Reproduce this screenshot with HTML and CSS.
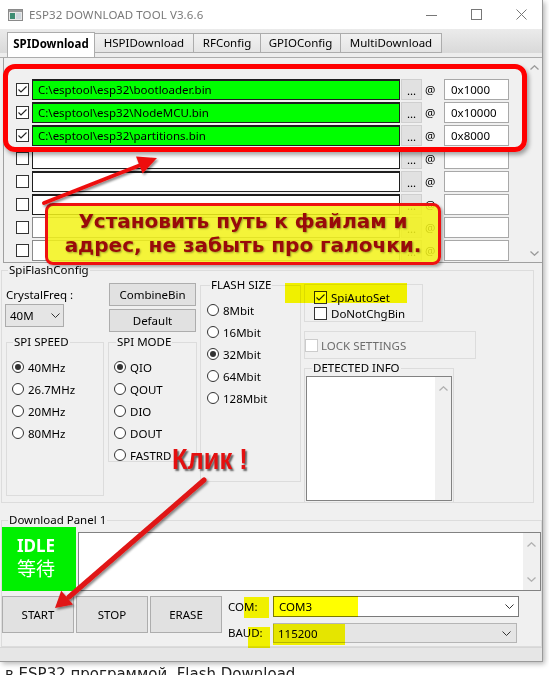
FILE: index.html
```html
<!DOCTYPE html>
<html lang="ru">
<head>
<meta charset="utf-8">
<title>ESP32 DOWNLOAD TOOL V3.6.6</title>
<link rel="stylesheet" href="styles.css">
</head>
<body>
<div class="window">
  <div class="titlebar">
    <svg class="appicon" width="15" height="12" viewBox="0 0 15 12"><rect x="0.5" y="0.5" width="14" height="11" fill="#e8e8e8" stroke="#8a8a8a"/><rect x="1" y="1" width="13" height="2" fill="#9a9a9a"/><rect x="2" y="4" width="5" height="6" fill="#3d8d73"/><rect x="8" y="4" width="5" height="6" fill="#cfd8de"/></svg>
    <span class="title">ESP32 DOWNLOAD TOOL V3.6.6</span>
    <div class="winctrls">
      <svg width="11" height="11" viewBox="0 0 11 11"><path d="M0 6.5H11" stroke="#777" stroke-width="1"/></svg>
      <svg width="11" height="11" viewBox="0 0 11 11"><rect x="0.5" y="0.5" width="10" height="10" fill="none" stroke="#777"/></svg>
      <svg width="11" height="11" viewBox="0 0 11 11"><path d="M0.5 0.5L10.5 10.5M10.5 0.5L0.5 10.5" stroke="#777" stroke-width="1"/></svg>
    </div>
  </div>

  <div class="tabbar">
    <div class="tab active w1">SPIDownload</div>
    <div class="tab w2">HSPIDownload</div>
    <div class="tab w3">RFConfig</div>
    <div class="tab w4">GPIOConfig</div>
    <div class="tab w5">MultiDownload</div>
  </div>

  <div class="content">
    <div class="filelist">
      <div class="rows">
        <div class="frow">
          <span class="cb"><svg width="11" height="11" viewBox="0 0 11 11"><path d="M1.5 5.5L4 8L9.5 2.5" fill="none" stroke="#222" stroke-width="1.1"/></svg></span>
          <div class="path filled">C:\esptool\esp32\bootloader.bin</div>
          <div class="dots">...</div>
          <span class="at">@</span>
          <div class="addr">0x1000</div>
        </div>
        <div class="frow">
          <span class="cb"><svg width="11" height="11" viewBox="0 0 11 11"><path d="M1.5 5.5L4 8L9.5 2.5" fill="none" stroke="#222" stroke-width="1.1"/></svg></span>
          <div class="path filled">C:\esptool\esp32\NodeMCU.bin</div>
          <div class="dots">...</div>
          <span class="at">@</span>
          <div class="addr">0x10000</div>
        </div>
        <div class="frow">
          <span class="cb"><svg width="11" height="11" viewBox="0 0 11 11"><path d="M1.5 5.5L4 8L9.5 2.5" fill="none" stroke="#222" stroke-width="1.1"/></svg></span>
          <div class="path filled">C:\esptool\esp32\partitions.bin</div>
          <div class="dots">...</div>
          <span class="at">@</span>
          <div class="addr">0x8000</div>
        </div>
        <div class="frow">
          <span class="cb"></span>
          <div class="path"></div>
          <div class="dots">...</div>
          <span class="at">@</span>
          <div class="addr"></div>
        </div>
        <div class="frow">
          <span class="cb"></span>
          <div class="path"></div>
          <div class="dots">...</div>
          <span class="at">@</span>
          <div class="addr"></div>
        </div>
        <div class="frow">
          <span class="cb"></span>
          <div class="path"></div>
          <div class="dots">...</div>
          <span class="at">@</span>
          <div class="addr"></div>
        </div>
        <div class="frow">
          <span class="cb"></span>
          <div class="path light"></div>
          <div class="dots">...</div>
          <span class="at">@</span>
          <div class="addr"></div>
        </div>
        <div class="frow">
          <span class="cb"></span>
          <div class="path light"></div>
          <div class="dots">...</div>
          <span class="at">@</span>
          <div class="addr"></div>
        </div>
      </div>
      <div class="vscroll">
        <svg width="9" height="5" viewBox="0 0 9 5"><path d="M0.5 4.5L4.5 0.8L8.5 4.5" fill="none" stroke="#9a9a9a" stroke-width="1.3"/></svg>
        <svg width="9" height="5" viewBox="0 0 9 5"><path d="M0.5 0.5L4.5 4.2L8.5 0.5" fill="none" stroke="#9a9a9a" stroke-width="1.3"/></svg>
      </div>
    </div>

    <div class="group spiflash">
      <span class="gtitle t-spi">SpiFlashConfig</span>
      <div class="cols">
        <div class="col c1">
          <div class="crystal-lbl">CrystalFreq :</div>
          <div class="combo c40">40M
            <svg class="chev" width="9" height="5" viewBox="0 0 9 5"><path d="M0.5 0.5L4.5 4.5L8.5 0.5" fill="none" stroke="#333"/></svg>
          </div>
          <div class="group g-speed">
            <span class="gtitle t-speed">SPI SPEED</span>
            <div class="opts">
              <div class="opt p5"><span class="radio on"></span><span class="olbl">40MHz</span></div>
              <div class="opt p5"><span class="radio"></span><span class="olbl">26.7MHz</span></div>
              <div class="opt p5"><span class="radio"></span><span class="olbl">20MHz</span></div>
              <div class="opt p5"><span class="radio"></span><span class="olbl">80MHz</span></div>
            </div>
          </div>
        </div>
        <div class="col c2">
          <div class="btn b-combine">CombineBin</div>
          <div class="btn b-default">Default</div>
          <div class="group g-mode">
            <span class="gtitle t-mode">SPI MODE</span>
            <div class="opts">
              <div class="opt p5"><span class="radio on"></span><span class="olbl">QIO</span></div>
              <div class="opt p5"><span class="radio"></span><span class="olbl">QOUT</span></div>
              <div class="opt p5"><span class="radio"></span><span class="olbl">DIO</span></div>
              <div class="opt p5"><span class="radio"></span><span class="olbl">DOUT</span></div>
              <div class="opt p5"><span class="radio"></span><span class="olbl">FASTRD</span></div>
            </div>
          </div>
        </div>
        <div class="col c3">
          <div class="group g-flash">
            <span class="gtitle t-flash">FLASH SIZE</span>
            <div class="opts">
              <div class="opt p6"><span class="radio"></span><span class="olbl">8Mbit</span></div>
              <div class="opt p6"><span class="radio"></span><span class="olbl">16Mbit</span></div>
              <div class="opt p6"><span class="radio on"></span><span class="olbl">32Mbit</span></div>
              <div class="opt p6"><span class="radio"></span><span class="olbl">64Mbit</span></div>
              <div class="opt p6"><span class="radio"></span><span class="olbl">128Mbit</span></div>
            </div>
          </div>
        </div>
        <div class="col c4">
          <div class="autobox">
            <div class="citem"><span class="cb"><svg width="11" height="11" viewBox="0 0 11 11"><path d="M1.5 5.5L4 8L9.5 2.5" fill="none" stroke="#222" stroke-width="1.1"/></svg></span><span class="clbl">SpiAutoSet</span></div>
            <div class="citem"><span class="cb"></span><span class="clbl">DoNotChgBin</span></div>
          </div>
          <div class="lockbox">
            <span class="cb disabled"></span><span class="lock-lbl">LOCK SETTINGS</span>
          </div>
          <div class="group g-detect">
            <span class="gtitle t-detect">DETECTED INFO</span>
            <div class="textbox">
              <div class="tb-scroll">
                <svg width="9" height="5" viewBox="0 0 9 5"><path d="M0.5 4.5L4.5 0.8L8.5 4.5" fill="none" stroke="#b0b0b0" stroke-width="1.3"/></svg>
              </div>
            </div>
          </div>
        </div>
      </div>
    </div>

    <div class="group dlpanel">
      <span class="gtitle t-dl">Download Panel 1</span>
      <div class="dl-top">
        <div class="idle"><span class="idle-en">IDLE</span><span class="idle-cn">等待</span></div>
        <div class="logbox">
          <div class="log-scroll">
            <svg width="9" height="5" viewBox="0 0 9 5"><path d="M0.5 4.5L4.5 0.8L8.5 4.5" fill="none" stroke="#b0b0b0" stroke-width="1.3"/></svg>
            <svg width="9" height="5" viewBox="0 0 9 5"><path d="M0.5 0.5L4.5 4.2L8.5 0.5" fill="none" stroke="#b0b0b0" stroke-width="1.3"/></svg>
          </div>
        </div>
      </div>
      <div class="dl-bottom">
        <div class="btn act">START</div>
        <div class="btn act">STOP</div>
        <div class="btn act">ERASE</div>
        <div class="portgrid">
          <span class="plbl">COM:</span>
          <div class="combo pcom">COM3
            <svg class="chev" width="9" height="5" viewBox="0 0 9 5"><path d="M0.5 0.5L4.5 4.5L8.5 0.5" fill="none" stroke="#333"/></svg>
          </div>
          <span class="plbl">BAUD:</span>
          <div class="combo pbaud">115200
            <svg class="chev" width="9" height="5" viewBox="0 0 9 5"><path d="M0.5 0.5L4.5 4.5L8.5 0.5" fill="none" stroke="#333"/></svg>
          </div>
        </div>
      </div>
    </div>

    <div class="statusbar"></div>
  </div>
</div>

<div class="pagetext">в ESP32 программой &nbsp;Flash Download</div>

<div class="hl hl-auto"></div>
<div class="hl hl-comlbl"></div>
<div class="hl hl-com"></div>
<div class="hl hl-baudlbl"></div>
<div class="hl hl-baud"></div>

<div class="redframe"></div>
<div class="callout">
  <span class="callout-text">Установить путь к файлам и<br>адрес, не забыть про галочки.</span>
</div>

<svg class="arrows" width="549" height="675" viewBox="0 0 549 675">
  <defs>
    <filter id="sh" x="-20%" y="-20%" width="140%" height="140%">
      <feDropShadow dx="1.5" dy="2" stdDeviation="1.2" flood-color="#000" flood-opacity="0.45"/>
    </filter>
  </defs>
  <g filter="url(#sh)" fill="#ee1111" stroke="none">
    <path d="M44 203L140.5 165" stroke="#ee1111" stroke-width="4" stroke-linecap="round"/>
    <polygon points="157,158 136,156.6 142.6,173.4"/>
  </g>
  <g filter="url(#sh)" fill="#e01515" stroke="none">
    <path d="M204 480L69 597" stroke="#e01515" stroke-width="5" stroke-linecap="round"/>
    <polygon points="55,608 61.2,590.8 73,604.4"/>
  </g>
</svg>

<div class="klik">Клик !</div>
</body>
</html>
```
FILE: styles.css
```css
* { box-sizing: border-box; }
html, body { margin: 0; padding: 0; }
body {
  position: relative;
  width: 549px;
  height: 675px;
  overflow: hidden;
  background: #ffffff;
  font-family: "Noto Sans", "Open Sans", "DejaVu Sans", sans-serif;
  font-size: 11.5px;
  color: #000;
}

/* ---------- window ---------- */
.window {
  width: 543px;
  background: #f0f0f0;
  border-right: 1px solid #9a9a9a;
  border-bottom: 1px solid #9a9a9a;
  box-shadow: 2px 2px 5px rgba(0,0,0,0.28);
  display: flex;
  flex-direction: column;
}
.titlebar {
  height: 29px;
  flex: none;
  background: #fff;
  display: flex;
  align-items: center;
  padding-left: 8px;
}
.appicon { flex: none; margin-top: 1px; }
.title {
  margin-left: 6px;
  color: #7a7a7a;
  font-size: 11.5px;
  letter-spacing: 0.1px;
}
.winctrls {
  margin-left: auto;
  margin-right: 15px;
  display: flex;
  gap: 34px;
  align-items: center;
}

.tabbar {
  height: 29px;
  flex: none;
  display: flex;
  align-items: flex-start;
  padding: 4px 0 0 7px;
  background: linear-gradient(#ebebeb, #d9d9d9 24px, #ededed 24px);
  border-bottom: 1px solid #acacac;
}
.tab {
  height: 20px;
  line-height: 18px;
  text-align: center;
  border: 1px solid #acacac;
  background: linear-gradient(#f2f2f2, #e4e4e4);
  margin-left: -1px;
  white-space: nowrap;
}
.tab.active {
  height: 25px;
  margin-top: -1px;
  margin-left: 0;
  padding-top: 2px;
  background: #fff;
  border-bottom: none;
  font-weight: bold;
}
.w1 { width: 88px; }
.w2 { width: 100px; }
.w3 { width: 68px; }
.w4 { width: 81px; }
.w5 { width: 102px; }

.content {
  display: flex;
  flex-direction: column;
}

/* ---------- file list ---------- */
.filelist {
  height: 205px;
  margin-left: 3px;
  border-left: 1px solid #a0a0a0;
  border-bottom: 1px solid #a0a0a0;
  display: flex;
}
.rows {
  flex: 1;
  padding-top: 21px;
}
.frow {
  height: 21px;
  margin-bottom: 2px;
  display: flex;
  align-items: center;
}
.cb {
  flex: none;
  width: 13px;
  height: 13px;
  border: 1px solid #333;
  background: #fff;
  display: grid;
  place-items: center;
}
.cb.disabled { border-color: #cccccc; }
.frow .cb { margin-left: 12px; }
.path {
  margin-left: 3px;
  width: 368px;
  height: 21px;
  border: 1px solid #1e1e1e;
  border-top-width: 2px;
  background: #fff;
  padding-left: 5px;
  line-height: 18px;
  white-space: nowrap;
}
.path.filled { background: #00ff00; }
.path.light { border-color: #8a8a8a; border-top-width: 1px; }
.dots {
  margin-left: 1px;
  width: 21px;
  height: 21px;
  background: #e1e1e1;
  border: 1px solid #cfcfcf;
  text-align: center;
  line-height: 22px;
}
.at {
  width: 22px;
  padding-left: 3px;
  line-height: 21px;
}
.addr {
  width: 65px;
  height: 21px;
  background: #fff;
  border: 1px solid #a8a8a8;
  padding-left: 6px;
  line-height: 19px;
}
.vscroll {
  width: 14px;
  margin-right: 1px;
  background: #f0f0f0;
  display: flex;
  flex-direction: column;
  align-items: center;
  justify-content: space-between;
  padding: 7px 0 6px;
}

/* ---------- group boxes ---------- */
.group {
  border: 1px solid #dcdcdc;
}
.gtitle {
  display: block;
  width: fit-content;
  margin-top: -8px;
  height: 14px;
  line-height: 14px;
  padding: 0 1px;
  background: #f0f0f0;
  white-space: nowrap;
}
.t-spi { margin-left: 6px; }
.t-speed { margin-left: 6px; }
.t-mode { margin-left: 7px; }
.t-flash { margin-left: 9px; }
.t-detect { margin-left: 7px; }
.t-dl { margin-left: 6px; }

.spiflash {
  margin: 7px 0 0 1px;
  width: 533px;
  height: 233px;
}
.cols {
  display: flex;
  align-items: flex-start;
  padding-left: 3px;
}
.col { display: flex; flex-direction: column; }
.c1 { width: 99px; }
.c2 { width: 89px; margin-left: 4px; }
.c3 { width: 101px; margin-left: 3px; }
.c4 { width: 172px; margin-left: 3px; }

.crystal-lbl {
  margin-top: 10px;
  line-height: 16px;
  padding-left: 1px;
}
.combo {
  display: flex;
  align-items: center;
  white-space: nowrap;
}
.combo .chev { margin-left: auto; flex: none; }
.c40 {
  margin-top: 1px;
  width: 59px;
  height: 23px;
  background: #e5e5e5;
  border: 1px solid #acacac;
  padding: 0 3px 0 4px;
}
.g-speed {
  margin: 15px 0 0 1px;
  width: 98px;
  height: 154px;
}
.opts { padding-top: 7px; }
.opt {
  height: 22px;
  display: flex;
  align-items: center;
}
.p5 { padding-left: 5px; }
.p6 { padding-left: 6px; }
.radio {
  flex: none;
  width: 12px;
  height: 12px;
  border: 1px solid #333;
  border-radius: 50%;
  background: #fff;
  display: grid;
  place-items: center;
}
.radio.on::after {
  content: "";
  width: 6px;
  height: 6px;
  border-radius: 50%;
  background: #333;
}
.olbl { margin-left: 4px; white-space: nowrap; }

.btn {
  background: #e1e1e1;
  border: 1px solid #adadad;
  display: flex;
  align-items: center;
  justify-content: center;
  white-space: nowrap;
}
.b-combine { margin: 6px 0 0 1px; width: 87px; height: 23px; }
.b-default { margin: 3px 0 0 1px; width: 87px; height: 23px; }
.g-mode {
  margin-top: 10px;
  width: 89px;
  height: 120px;
}
.g-flash {
  margin-top: 8px;
  width: 101px;
  height: 197px;
}

.autobox {
  margin-top: 7px;
  width: 119px;
  height: 38px;
  border: 1px solid #dcdcdc;
  padding: 4px 0 0 9px;
}
.citem {
  height: 16px;
  display: flex;
  align-items: center;
}
.clbl { margin-left: 4px; }
.lockbox {
  margin-top: 9px;
  width: 172px;
  height: 28px;
  border: 1px solid #dcdcdc;
  display: flex;
  align-items: center;
}
.lock-lbl { margin-left: 3px; color: #6d6d6d; }
.g-detect {
  margin-top: 9px;
  width: 150px;
  height: 135px;
}
.textbox {
  margin: 1px 1px 0 1px;
  height: 125px;
  background: #fff;
  border: 1px solid #828282;
  display: flex;
  justify-content: flex-end;
}
.tb-scroll {
  width: 16px;
  background: #f0f0f0;
  display: flex;
  justify-content: center;
  padding-top: 9px;
}

/* ---------- download panel ---------- */
.dlpanel {
  margin: 17px 0 0 1px;
  width: 541px;
  height: 127px;
}
.dl-top {
  display: flex;
  align-items: flex-start;
}
.idle {
  width: 74px;
  height: 64px;
  background: #00f000;
  color: #fff;
  display: flex;
  flex-direction: column;
  gap: 2px;
  padding: 9px 0 0 15px;
}
.idle-en {
  height: 19px;
  font-size: 17px;
  font-weight: bold;
  line-height: 19px;
}
.idle-cn {
  height: 21px;
  font-family: "Noto Sans CJK SC", "Noto Sans CJK JP", sans-serif;
  font-size: 19px;
  line-height: 21px;
}
.logbox {
  flex: 1;
  margin: 5px 0 0 2px;
  height: 59px;
  background: #fff;
  border: 1px solid #828282;
  display: flex;
  justify-content: flex-end;
}
.log-scroll {
  width: 17px;
  background: #f0f0f0;
  display: flex;
  flex-direction: column;
  align-items: center;
  justify-content: space-between;
  padding: 9px 0 8px;
}
.dl-bottom {
  margin-top: 5px;
  display: flex;
  align-items: flex-start;
}
.btn.act {
  width: 72px;
  height: 37px;
  margin-right: 2px;
}
.portgrid {
  margin-left: 4px;
  display: grid;
  grid-template-columns: 45px 246px;
  grid-template-rows: 21px 20px;
  row-gap: 6px;
  align-items: center;
}
.plbl { line-height: 16px; }
.pcom {
  height: 21px;
  background: #fff;
  border: 1px solid #7a7a7a;
  padding: 0 4px 0 5px;
}
.pbaud {
  width: 244px;
  height: 20px;
  background: #e5e5e5;
  border: 1px solid #b5b5b5;
  padding: 0 5px 0 4px;
}

.statusbar {
  height: 14px;
  background: #e6e6e6;
  border-top: 1px solid #d6d6d6;
}

.pagetext {
  margin-top: 3px;
  padding-left: 5px;
  font-family: "DejaVu Sans", sans-serif;
  font-size: 15px;
  line-height: 18px;
  color: #222;
  white-space: nowrap;
}

/* ---------- annotations (overlay) ---------- */
.hl {
  position: absolute;
  background: #ffff00;
  mix-blend-mode: multiply;
}
.hl-auto { left: 285px; top: 283px; width: 122px; height: 20px; }
.hl-comlbl { left: 244px; top: 597px; width: 25px; height: 21px; }
.hl-com { left: 273px; top: 596px; width: 85px; height: 21px; }
.hl-baudlbl { left: 248px; top: 627px; width: 22px; height: 21px; }
.hl-baud { left: 273px; top: 624px; width: 72px; height: 21px; }

.redframe {
  position: absolute;
  left: 3px;
  top: 64px;
  width: 524px;
  height: 88px;
  border: 5px solid #ff0000;
  border-radius: 12px;
  box-shadow: 2px 3px 4px rgba(0,0,0,0.35);
}
.callout {
  position: absolute;
  left: 45px;
  top: 203px;
  width: 396px;
  height: 62px;
  border: 3px solid #ee1111;
  border-radius: 8px;
  background: rgba(242, 242, 25, 0.86);
  box-shadow: 2px 2px 3px rgba(0,0,0,0.3);
  display: flex;
  align-items: center;
  justify-content: center;
  padding-bottom: 3px;
}
.callout-text {
  font-family: "DejaVu Sans", "Liberation Sans", sans-serif;
  font-weight: bold;
  font-size: 20px;
  line-height: 24px;
  color: #990a0a;
  text-align: center;
  white-space: nowrap;
  text-shadow: 1px 1px 2px rgba(0,0,0,0.35);
}
.arrows {
  position: absolute;
  left: 0;
  top: 0;
  pointer-events: none;
}
.klik {
  position: absolute;
  left: 172px;
  top: 444px;
  font-family: "Liberation Sans", "Arial", sans-serif;
  font-weight: bold;
  font-size: 30px;
  line-height: 30px;
  color: #e41010;
  white-space: nowrap;
  transform: scaleX(0.85);
  transform-origin: left top;
  text-shadow: 2px 2px 2px rgba(0,0,0,0.6);
}
```
